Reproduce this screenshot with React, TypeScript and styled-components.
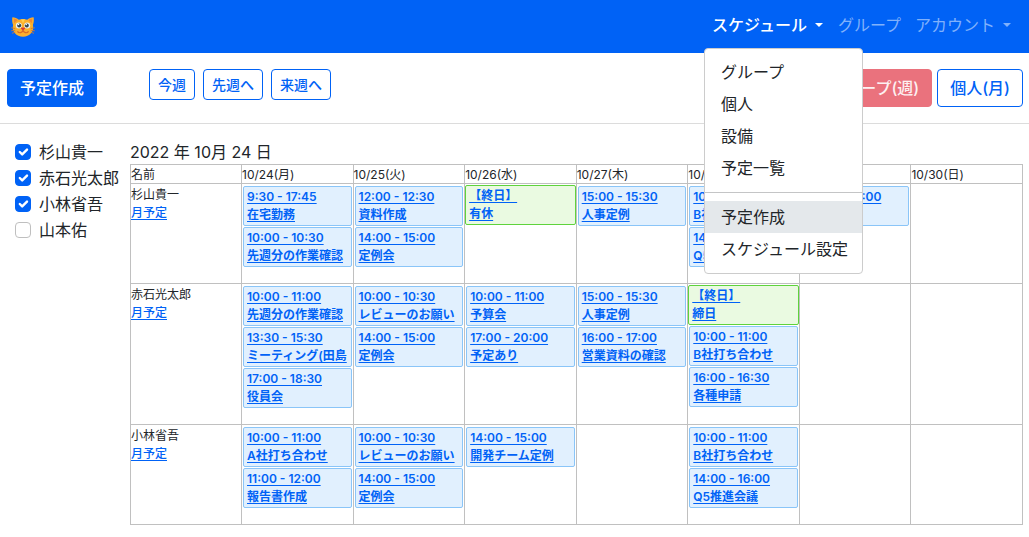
import React from "react";
import styled, { createGlobalStyle } from "styled-components";

const blue = "#0062f6";

const GlobalStyle = createGlobalStyle`
  *, *::before, *::after { box-sizing: border-box; }
  body {
    margin: 0;
    background: #fff;
    color: #212529;
    font-family: Inter, "Noto Sans CJK JP", sans-serif;
    font-size: 16px;
    line-height: 24px;
  }
  a { color: ${blue}; }
`;

const Navbar = styled.header`
  display: flex;
  align-items: flex-start;
  justify-content: space-between;
  height: 53px;
  padding: 5px 11px 0 11px;
  background: ${blue};
`;

const Brand = styled.a`
  display: flex;
  padding-top: 10px;
`;

const NavList = styled.ul`
  display: flex;
  margin: 0;
  padding: 0;
  list-style: none;
`;

const NavItem = styled.li`
  position: relative;
`;

const NavLink = styled.a<{ $active?: boolean }>`
  display: flex;
  align-items: center;
  gap: 8px;
  padding: ${(p) => (p.$active ? "8px" : "8px 7px")};
  color: ${(p) => (p.$active ? "#fff" : "#80b1fb")};
  font-weight: ${(p) => (p.$active ? 500 : 400)};
  text-decoration: none;
  white-space: nowrap;
`;

const Caret = styled.span`
  border: 4px solid transparent;
  border-top-color: currentColor;
  border-bottom: 0;
`;

const Menu = styled.ul`
  position: absolute;
  top: 43px;
  left: 0;
  z-index: 10;
  width: 159px;
  margin: 0;
  padding: 7px 0 8px;
  list-style: none;
  background: #fff;
  border: 1px solid #cccccc;
  border-radius: 4px;
`;

const MenuLink = styled.a<{ $current?: boolean }>`
  display: block;
  padding: 4px 12px 4px 16px;
  color: #212529;
  background: ${(p) => (p.$current ? "#e4e8eb" : "transparent")};
  text-decoration: none;
  white-space: nowrap;
`;

const MenuDivider = styled.li`
  height: 1px;
  margin: 8px 0;
  background: #c4c5c6;
`;

const Toolbar = styled.div`
  display: flex;
  align-items: flex-start;
  justify-content: space-between;
  padding: 16px 6px 16px 7px;
  border-bottom: 1px solid #dcdcdc;
`;

const ButtonGroup = styled.div<{ $gap: number }>`
  display: flex;
  align-items: flex-start;
  gap: ${(p) => p.$gap}px;
`;

const WeekButtons = styled(ButtonGroup)`
  margin-left: 52px;
`;

const palettes = {
  primary: `color: #fff; background: ${blue}; border-color: ${blue};`,
  outline: `color: ${blue}; background: #fff; border-color: ${blue};`,
  danger: `color: #fdf0f1; background: #ea727d; border-color: #ea727d;`,
};

const Button = styled.button<{ $kind: keyof typeof palettes; $small?: boolean }>`
  padding: ${(p) => (p.$small ? "4px 8px" : "6px 12px")};
  border: 1px solid;
  border-radius: 4px;
  font-family: inherit;
  font-weight: 500;
  font-size: ${(p) => (p.$small ? 14 : 16)}px;
  line-height: ${(p) => (p.$small ? 21 : 24)}px;
  white-space: nowrap;
  ${(p) => palettes[p.$kind]}
`;

const Page = styled.main`
  display: flex;
  padding: 16px 6px 12px 15px;
`;

const Members = styled.aside`
  flex: 0 0 115px;
  display: flex;
  flex-direction: column;
  gap: 2px;
`;

const Member = styled.label`
  display: flex;
  align-items: center;
  gap: 8px;
  white-space: nowrap;
`;

const CheckBox = styled.input`
  appearance: none;
  flex: none;
  width: 16px;
  height: 16px;
  margin: 0;
  border: 1px solid #bfbfbf;
  border-radius: 4px;
  &:checked {
    border-color: ${blue};
    background: ${blue} url("data:image/svg+xml,%3Csvg xmlns='http://www.w3.org/2000/svg' viewBox='0 0 20 20'%3E%3Cpath fill='none' stroke='%23fff' stroke-linecap='round' stroke-linejoin='round' stroke-width='3' d='m6 10 3 3 6-6'/%3E%3C/svg%3E") center / 16px;
  }
`;

const Schedule = styled.section`
  flex: 1;
  min-width: 0;
`;

const DateTitle = styled.h1`
  margin: 0;
  font-size: 16px;
  font-weight: 400;
  line-height: 24px;
`;

const Calendar = styled.table`
  width: 100%;
  table-layout: fixed;
  border-collapse: collapse;
  font-size: 12px;
  line-height: 18px;
`;

const HeadCell = styled.th`
  padding: 2px 0 0;
  border: 1px solid #c0c0c0;
  font-weight: 400;
  line-height: 16px;
  text-align: left;
  white-space: nowrap;
  &:first-child { width: 111px; }
`;

const NameCell = styled.th`
  padding: 2px 0 0;
  border: 1px solid #c0c0c0;
  font-weight: 400;
  text-align: left;
  vertical-align: top;
`;

const NameLink = styled.a`
  display: table;
  font-weight: 500;
  text-underline-offset: 2px;
`;

const DayCell = styled.td`
  padding: 1px 0 15px;
  border: 1px solid #c0c0c0;
  vertical-align: top;
`;

const EventBox = styled.div<{ $allDay?: boolean }>`
  height: 40px;
  margin: ${(p) => (p.$allDay ? 0 : 1)}px;
  padding: 1px 3px;
  overflow: hidden;
  border: 1px solid ${(p) => (p.$allDay ? "#5fd33c" : "#8ac5f8")};
  border-radius: 2px;
  background: ${(p) => (p.$allDay ? "#eafae1" : "#e1f0fe")};
`;

const EventLink = styled.a`
  font-weight: 600;
  text-underline-offset: 2px;
  white-space: nowrap;
`;

type Entry = [time: string, title: string];

const days = ["10/24(月)", "10/25(火)", "10/26(水)", "10/27(木)", "10/28(金)", "10/29(土)", "10/30(日)"];

const rows: { name: string; week: Entry[][] }[] = [
  {
    name: "杉山貴一",
    week: [
      [["9:30 - 17:45", "在宅勤務"], ["10:00 - 10:30", "先週分の作業確認"]],
      [["12:00 - 12:30", "資料作成"], ["14:00 - 15:00", "定例会"]],
      [["【終日】", "有休"]],
      [["15:00 - 15:30", "人事定例"]],
      [["10:00 - 11:00", "B社打ち合わせ"], ["14:00 - 16:00", "Q5推進会議"]],
      [["10:00 - 12:00", "研修"]],
      [],
    ],
  },
  {
    name: "赤石光太郎",
    week: [
      [["10:00 - 11:00", "先週分の作業確認"], ["13:30 - 15:30", "ミーティング(田島"], ["17:00 - 18:30", "役員会"]],
      [["10:00 - 10:30", "レビューのお願い"], ["14:00 - 15:00", "定例会"]],
      [["10:00 - 11:00", "予算会"], ["17:00 - 20:00", "予定あり"]],
      [["15:00 - 15:30", "人事定例"], ["16:00 - 17:00", "営業資料の確認"]],
      [["【終日】", "締日"], ["10:00 - 11:00", "B社打ち合わせ"], ["16:00 - 16:30", "各種申請"]],
      [],
      [],
    ],
  },
  {
    name: "小林省吾",
    week: [
      [["10:00 - 11:00", "A社打ち合わせ"], ["11:00 - 12:00", "報告書作成"]],
      [["10:00 - 10:30", "レビューのお願い"], ["14:00 - 15:00", "定例会"]],
      [["14:00 - 15:00", "開発チーム定例"]],
      [],
      [["10:00 - 11:00", "B社打ち合わせ"], ["14:00 - 16:00", "Q5推進会議"]],
      [],
      [],
    ],
  },
];

const members = [
  { name: "杉山貴一", shown: true },
  { name: "赤石光太郎", shown: true },
  { name: "小林省吾", shown: true },
  { name: "山本佑", shown: false },
];

const CatLogo = () => (
  <svg width="24" height="24" viewBox="0 0 24 24" aria-hidden="true">
    <path d="M1.4 2.2c2.3 0 4.8 1 6.4 2.5 2.7-.8 5.7-.8 8.4 0 1.6-1.5 4.1-2.5 6.4-2.5.5 2.8.2 5.5-.7 7.6 1.6 6.8-3.3 12-9.9 12S.5 16.6 2.1 9.8C1.2 7.7.9 5 1.4 2.2z" fill="#fbb02d" />
    <path d="M2.7 3.5c1.5.2 2.9.8 3.9 1.7L3.1 8.3zM21.3 3.5c-1.5.2-2.9.8-3.9 1.7l3.5 3.1z" fill="#f08a35" />
    <path d="M10 4.3h4l-2 4z" fill="#ffd04f" />
    <path d="M.2 12.8l4 .7M.2 15.8l4-.5M1 18.3l3.4-1.3M23.8 12.8l-4 .7M23.8 15.8l-4-.5M23 18.3L19.6 17" stroke="#c67b3a" strokeWidth=".9" />
    <circle cx="7.8" cy="10.5" r="3" fill="#e9f3f7" />
    <circle cx="16.2" cy="10.5" r="3" fill="#e9f3f7" />
    <circle cx="8.2" cy="10.5" r="2" fill="#37464f" />
    <circle cx="15.8" cy="10.5" r="2" fill="#37464f" />
    <circle cx="7.5" cy="9.5" r=".8" fill="#fff" />
    <circle cx="15.2" cy="9.5" r=".8" fill="#fff" />
    <path d="M10.2 13.1h3.6L12 15.4z" fill="#d83b35" stroke="#d83b35" strokeWidth="1" strokeLinejoin="round" />
    <path d="M12 15.2c-.5 2.7-4 3.5-5.6 1.2M12 15.2c.5 2.7 4 3.5 5.6 1.2" fill="none" stroke="#d96b28" strokeWidth="1.2" />
  </svg>
);

const isAllDay = (time: string) => time === "【終日】";

export default function App() {
  return (
    <>
      <GlobalStyle />
      <Navbar>
        <Brand href="#" aria-label="ホーム"><CatLogo /></Brand>
        <nav>
          <NavList>
            <NavItem>
              <NavLink href="#" $active aria-expanded="true">スケジュール<Caret /></NavLink>
              <Menu>
                <li><MenuLink href="#">グループ</MenuLink></li>
                <li><MenuLink href="#">個人</MenuLink></li>
                <li><MenuLink href="#">設備</MenuLink></li>
                <li><MenuLink href="#">予定一覧</MenuLink></li>
                <MenuDivider role="separator" />
                <li><MenuLink href="#" $current>予定作成</MenuLink></li>
                <li><MenuLink href="#">スケジュール設定</MenuLink></li>
              </Menu>
            </NavItem>
            <NavItem><NavLink href="#">グループ</NavLink></NavItem>
            <NavItem><NavLink href="#">アカウント<Caret /></NavLink></NavItem>
          </NavList>
        </nav>
      </Navbar>
      <Toolbar>
        <ButtonGroup $gap={0}>
          <Button $kind="primary">予定作成</Button>
          <WeekButtons $gap={8}>
            <Button $kind="outline" $small>今週</Button>
            <Button $kind="outline" $small>先週へ</Button>
            <Button $kind="outline" $small>来週へ</Button>
          </WeekButtons>
        </ButtonGroup>
        <ButtonGroup $gap={5}>
          <Button $kind="danger">グループ(週)</Button>
          <Button $kind="outline">個人(月)</Button>
        </ButtonGroup>
      </Toolbar>
      <Page>
        <Members>
          {members.map((m) => (
            <Member key={m.name}>
              <CheckBox type="checkbox" defaultChecked={m.shown} />
              {m.name}
            </Member>
          ))}
        </Members>
        <Schedule>
          <DateTitle>2022 年 10月 24 日</DateTitle>
          <Calendar>
            <thead>
              <tr>
                <HeadCell scope="col">名前</HeadCell>
                {days.map((d) => <HeadCell key={d} scope="col">{d}</HeadCell>)}
              </tr>
            </thead>
            <tbody>
              {rows.map((row) => (
                <tr key={row.name}>
                  <NameCell scope="row">
                    {row.name}
                    <NameLink href="#">月予定</NameLink>
                  </NameCell>
                  {row.week.map((entries, day) => (
                    <DayCell key={day}>
                      {entries.map(([time, title]) => (
                        <EventBox key={time} $allDay={isAllDay(time)}>
                          <EventLink href="#">{time}<br />{title}</EventLink>
                        </EventBox>
                      ))}
                    </DayCell>
                  ))}
                </tr>
              ))}
            </tbody>
          </Calendar>
        </Schedule>
      </Page>
    </>
  );
}
